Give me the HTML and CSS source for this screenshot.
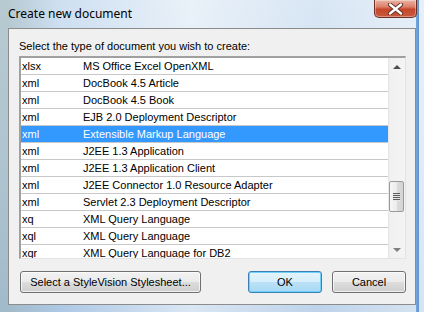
FILE: index.html
```html
<!DOCTYPE html>
<html lang="en">
<head>
    <meta charset="UTF-8">
    <meta name="viewport" content="width=device-width, initial-scale=1.0">
    <title>Create new document</title>
    <link rel="stylesheet" href="styles.css">
</head>
<body>
    <div class="window">
        <div class="titlebar">
            <span class="title">Create new document</span>
            <button class="close" title="Close">
                <svg width="17" height="12" viewBox="0 0 17 12">
                    <path d="M3 1.5 L14 10.5 M14 1.5 L3 10.5" stroke="#5a2a22" stroke-width="4.2" stroke-linecap="round"/>
                    <path d="M3 1.5 L14 10.5 M14 1.5 L3 10.5" stroke="#fff" stroke-width="2.4" stroke-linecap="round"/>
                </svg>
            </button>
        </div>
        <div class="client">
            <div class="prompt">Select the type of document you wish to create:</div>
            <div class="listbox">
                <div class="rows">
                    <div class="row"><span class="ext">xlsx</span><span class="desc">MS Office Excel OpenXML</span></div>
                    <div class="row"><span class="ext">xml</span><span class="desc">DocBook 4.5 Article</span></div>
                    <div class="row"><span class="ext">xml</span><span class="desc">DocBook 4.5 Book</span></div>
                    <div class="row"><span class="ext">xml</span><span class="desc">EJB 2.0 Deployment Descriptor</span></div>
                    <div class="row selected"><span class="ext">xml</span><span class="desc">Extensible Markup Language</span></div>
                    <div class="row"><span class="ext">xml</span><span class="desc">J2EE 1.3 Application</span></div>
                    <div class="row"><span class="ext">xml</span><span class="desc">J2EE 1.3 Application Client</span></div>
                    <div class="row"><span class="ext">xml</span><span class="desc">J2EE Connector 1.0 Resource Adapter</span></div>
                    <div class="row"><span class="ext">xml</span><span class="desc">Servlet 2.3 Deployment Descriptor</span></div>
                    <div class="row"><span class="ext">xq</span><span class="desc">XML Query Language</span></div>
                    <div class="row"><span class="ext">xql</span><span class="desc">XML Query Language</span></div>
                    <div class="row"><span class="ext">xqr</span><span class="desc">XML Query Language for DB2</span></div>
                </div>
                <div class="scrollbar">
                    <div class="arrow"><span class="tri up"></span></div>
                    <div class="track">
                        <div class="thumb"><span class="grip"></span></div>
                    </div>
                    <div class="arrow"><span class="tri down"></span></div>
                </div>
            </div>
            <div class="buttons">
                <button class="btn wide">Select a StyleVision Stylesheet...</button>
                <span class="spacer"></span>
                <button class="btn default">OK</button>
                <button class="btn">Cancel</button>
            </div>
        </div>
    </div>
</body>
</html>
```

FILE: styles.css
```css
body, html {
    margin: 0;
    padding: 0;
    background-color: #fff;
}
.window {
    box-sizing: border-box;
    width: 424px;
    height: 312px;
    padding: 0 8px 7px 8px;
    display: flex;
    flex-direction: column;
    background:
        linear-gradient(90deg, transparent 416px, #77a8dd 416px, #5e93cf 419px, transparent 419px),
        linear-gradient(90deg, rgba(140,160,150,0.35) 2%, rgba(255,255,255,0) 14%, rgba(255,255,255,0.55) 45%, rgba(255,255,255,0.2) 75%, rgba(255,255,255,0.5) 100%),
        linear-gradient(180deg, #cfe0f1 0%, #c2d8ee 50%, #adc8e5 100%);
}
.titlebar {
    height: 28px;
    display: flex;
    align-items: flex-start;
}
.title {
    font-family: "Noto Sans", "Liberation Sans", sans-serif;
    font-size: 12px;
    line-height: 16px;
    padding-top: 6px;
    color: #000;
}
.close {
    margin-left: auto;
    margin-right: -1px;
    width: 43px;
    height: 18px;
    padding: 0;
    border: 1px solid #6b2f25;
    border-top: none;
    border-radius: 0 0 5px 5px;
    background: linear-gradient(180deg, #eab3a4 0%, #dc806a 40%, #c6452b 55%, #c95a3e 100%);
    display: flex;
    align-items: center;
    justify-content: center;
    box-shadow: inset 0 0 0 1px rgba(255,255,255,0.35);
}
.client {
    flex: 1;
    background-color: #f0f0f0;
    border: 1px solid #8c8c8c;
    padding: 11px 9px 0 10px;
    font-family: "Liberation Sans", Arial, sans-serif;
    font-size: 11px;
    color: #000;
}
.prompt {
    line-height: 13px;
    margin-bottom: 3px;
}
.listbox {
    box-sizing: border-box;
    height: 203px;
    display: flex;
    background-color: #fff;
    border-style: solid;
    border-width: 2px 1px 1px 2px;
    border-color: #a0a0a0 #e3e3e3 #e3e3e3 #a0a0a0;
}
.rows {
    flex: 1;
    overflow: hidden;
}
.row {
    display: flex;
    height: 16px;
    line-height: 16px;
    border-bottom: 1px solid #c8c8c8;
    white-space: nowrap;
}
.row.selected {
    background-color: #3399ff;
    color: #fff;
}
.ext {
    width: 61px;
    padding-left: 1px;
}
.scrollbar {
    width: 17px;
    display: flex;
    flex-direction: column;
    background: linear-gradient(90deg, #e4e4e4 0, #f1f1f1 2px, #f4f4f4 100%);
}
.arrow {
    height: 17px;
    display: flex;
    align-items: center;
    justify-content: center;
}
.tri {
    width: 0;
    height: 0;
    border-left: 4px solid transparent;
    border-right: 4px solid transparent;
}
.tri.up {
    border-bottom: 4px solid #4d4d4d;
}
.tri.down {
    border-top: 4px solid #4d4d4d;
    opacity: 0.7;
}
.track {
    flex: 1;
}
.thumb {
    box-sizing: border-box;
    margin: 106px 1px 0 1px;
    height: 31px;
    border: 1px solid #9a9a9a;
    border-radius: 2px;
    background: linear-gradient(90deg, #f6f6f6 0%, #ececec 50%, #dcdcdc 51%, #d4d4d4 100%);
    display: flex;
    align-items: center;
    justify-content: center;
}
.grip {
    width: 7px;
    height: 8px;
    background: repeating-linear-gradient(180deg, #5c5c5c 0, #5c5c5c 1px, #e8e8e8 1px, #e8e8e8 2px);
}
.buttons {
    display: flex;
    margin-top: 12px;
    padding-left: 1px;
    gap: 10px;
}
.spacer {
    flex: 1;
}
.btn {
    box-sizing: border-box;
    width: 74px;
    height: 22px;
    padding: 0;
    font-family: "Liberation Sans", Arial, sans-serif;
    font-size: 11px;
    color: #000;
    border: 1px solid #707070;
    border-radius: 3px;
    background: linear-gradient(180deg, #f2f2f2 0%, #ebebeb 48%, #dddddd 50%, #cfcfcf 100%);
    box-shadow: inset 0 0 0 1px rgba(255,255,255,0.7);
}
.btn.wide {
    width: 181px;
}
.btn.default {
    border-color: #3c7fb1;
    background: linear-gradient(180deg, #e5f4fc 0%, #d6eefb 48%, #bbe2f8 50%, #a8d9f5 100%);
    box-shadow: inset 0 0 0 1px #6fd0f9;
}
```
